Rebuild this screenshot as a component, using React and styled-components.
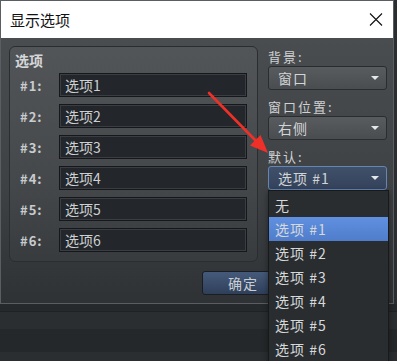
import React from 'react';
import styled, { createGlobalStyle } from 'styled-components';

const GlobalStyle = createGlobalStyle`
  html, body {
    margin: 0;
    padding: 0;
    background: #2b2e31;
  }
  body {
    font-family: "Noto Sans CJK SC", "Noto Sans", sans-serif;
  }
`;

const Screen = styled.div`
  position: relative;
  width: 397px;
  height: 361px;
  overflow: hidden;
  display: flex;
  flex-direction: column;
  background: #2b2e31;
`;

const Window = styled.div`
  width: 394px;
  box-sizing: border-box;
  border: 1px solid #5a5d61;
  display: flex;
  flex-direction: column;
`;

const TitleBar = styled.div`
  height: 37px;
  background: #ffffff;
  display: flex;
  align-items: center;
  justify-content: space-between;
  padding: 0 10px 0 9px;
`;

const Title = styled.span`
  font-size: 15px;
  color: #111;
  line-height: 1;
`;

const Body = styled.div`
  display: grid;
  grid-template-columns: 249px 1fr;
  column-gap: 10px;
  padding: 8px 6px 8px 8px;
  background: linear-gradient(to bottom, #4a4d50 0%, #3f4245 55%, #2f3235 100%);
`;

const GroupBox = styled.div`
  box-sizing: border-box;
  border: 1px solid #2b2e31;
  border-radius: 6px;
  padding: 4px 10px 9px 5px;
  background: linear-gradient(to bottom, rgba(255,255,255,0.05), rgba(255,255,255,0.02));
  display: flex;
  flex-direction: column;
  gap: 7px;
`;

const GroupTitle = styled.div`
  font-size: 14px;
  font-weight: 700;
  line-height: 18px;
  color: #d4d6d8;
  margin-bottom: -3px;
`;

const Row = styled.div`
  display: flex;
  align-items: center;
  height: 24px;
`;

const RowLabel = styled.span`
  width: 44px;
  padding-left: 5px;
  box-sizing: border-box;
  font-size: 13px;
  font-weight: 700;
  letter-spacing: 1px;
  color: #c9ccce;
`;

const Input = styled.div`
  flex: 1;
  height: 24px;
  box-sizing: border-box;
  border: 1px solid #15171a;
  box-shadow: inset 0 0 0 1px #3a3d41;
  background: #23262a;
  display: flex;
  align-items: center;
  padding-left: 5px;
  font-size: 14px;
  color: #cdd0d2;
`;

const SideColumn = styled.div`
  display: flex;
  flex-direction: column;
  gap: 8px;
  padding-top: 2px;
`;

const Field = styled.div`
  display: flex;
  flex-direction: column;
`;

const FieldLabel = styled.span`
  font-size: 13px;
  line-height: 18px;
  letter-spacing: 2px;
  color: #cfd1d3;
`;

const Combo = styled.div`
  height: 24px;
  box-sizing: border-box;
  border: 1px solid ${({ $active }) => ($active ? '#6485b6' : '#2a2c2f')};
  border-radius: 3px;
  background: ${({ $active }) =>
    $active
      ? 'linear-gradient(to bottom, #3f5069, #34435a)'
      : 'linear-gradient(to bottom, #595c5f, #4a4d50)'};
  display: flex;
  align-items: center;
  justify-content: space-between;
  padding: 0 7px 0 9px;
  font-size: 14px;
  letter-spacing: 1px;
  color: #d2d4d6;
`;

const Caret = styled.span`
  width: 0;
  height: 0;
  border-left: 4px solid transparent;
  border-right: 4px solid transparent;
  border-top: 4px solid #e4e6e8;
`;

const Footer = styled.div`
  grid-column: 1 / -1;
  margin-top: 9px;
  display: flex;
  padding-left: 193px;
`;

const Button = styled.div`
  width: 82px;
  height: 24px;
  box-sizing: border-box;
  border: 1px solid #1a1e24;
  border-radius: 3px;
  background: linear-gradient(to bottom, #455a7a, #2f3f59);
  display: flex;
  align-items: center;
  justify-content: center;
  font-size: 14px;
  letter-spacing: 1px;
  color: #c9ced4;
`;

const Backdrop = styled.div`
  flex: 1;
  background: linear-gradient(
    to bottom,
    #26292c 0 7px,
    #1f2224 7px 8px,
    #2b2e31 8px 25px,
    #25282a 25px 48px,
    #2b2e31 48px
  );
`;

const DropList = styled.div`
  position: absolute;
  left: 268px;
  top: 190px;
  width: 121px;
  height: 180px;
  box-sizing: border-box;
  border: 1px solid #17191b;
  background: #2a2d30;
  padding-top: 2px;
  box-shadow: 0 2px 6px rgba(0,0,0,0.4);
`;

const DropItem = styled.div`
  height: 24px;
  display: flex;
  align-items: center;
  padding-left: 6px;
  font-size: 14px;
  letter-spacing: 1px;
  color: #d6d8da;
  background: ${({ $selected }) =>
    $selected ? 'linear-gradient(to bottom, #6190e0, #4f7dcc)' : 'transparent'};
`;

const Overlay = styled.svg`
  position: absolute;
  left: 0;
  top: 0;
  pointer-events: none;
`;

const rows = ['选项1', '选项2', '选项3', '选项4', '选项5', '选项6'];
const options = ['无', '选项 #1', '选项 #2', '选项 #3', '选项 #4', '选项 #5', '选项 #6'];

export default function App() {
  return (
    <>
      <GlobalStyle />
      <Screen>
        <Window>
          <TitleBar>
            <Title>显示选项</Title>
            <svg width="14" height="13" viewBox="0 0 14 13">
              <path d="M1 0.5 L13 12.5 M13 0.5 L1 12.5" stroke="#111" strokeWidth="1.1" fill="none" />
            </svg>
          </TitleBar>
          <Body>
            <GroupBox>
              <GroupTitle>选项</GroupTitle>
              {rows.map((r, i) => (
                <Row key={r}>
                  <RowLabel>#{i + 1}:</RowLabel>
                  <Input>{r}</Input>
                </Row>
              ))}
            </GroupBox>
            <SideColumn>
              <Field>
                <FieldLabel>背景:</FieldLabel>
                <Combo>
                  窗口
                  <Caret />
                </Combo>
              </Field>
              <Field>
                <FieldLabel>窗口位置:</FieldLabel>
                <Combo>
                  右侧
                  <Caret />
                </Combo>
              </Field>
              <Field>
                <FieldLabel>默认:</FieldLabel>
                <Combo $active>
                  选项 #1
                  <Caret />
                </Combo>
              </Field>
            </SideColumn>
            <Footer>
              <Button>确定</Button>
            </Footer>
          </Body>
        </Window>
        <Backdrop />
        <DropList>
          {options.map((o, i) => (
            <DropItem key={o} $selected={i === 1}>
              {o}
            </DropItem>
          ))}
        </DropList>
        <Overlay width="397" height="361" viewBox="0 0 397 361">
          <line x1="209" y1="93" x2="257" y2="142" stroke="#ee3028" strokeWidth="2.6" strokeLinecap="round" />
          <polygon points="268,153 250,145.5 260.5,135" fill="#ee3028" />
        </Overlay>
      </Screen>
    </>
  );
}
